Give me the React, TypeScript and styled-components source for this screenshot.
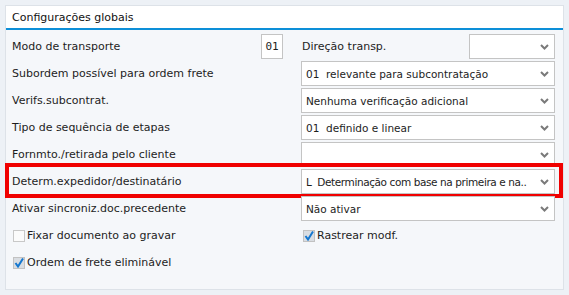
import React from 'react'
import styled, { createGlobalStyle, css } from 'styled-components'

const GlobalStyle = createGlobalStyle`
  html, body {
    margin: 0;
    padding: 0;
    background: #edf1f6;
  }
  body {
    font-family: 'DejaVu Sans', 'Noto Sans', sans-serif;
    font-size: 11px;
    color: #1d1d1d;
  }
`

const Page = styled.div`
  padding: 5px;
`

const Panel = styled.section`
  height: 285px;
  box-sizing: border-box;
  border: 1px solid #dde2e8;
  background: #f5f7fa;
  display: flex;
  flex-direction: column;
`

const Header = styled.header`
  height: 22px;
  background: #ffffff;
  border-bottom: 2px solid #0d8fd8;
  display: flex;
  align-items: center;
  padding: 0 6px;
  font-size: 11px;
  color: #111;
`

const Body = styled.div`
  padding: 3px 8px 0 6px;
  display: flex;
  flex-direction: column;
`

const Row = styled.div<{ $highlight?: boolean }>`
  position: relative;
  height: 27px;
  display: flex;
  align-items: center;
  ${({ $highlight }) =>
    $highlight &&
    css`
      &::after {
        content: '';
        position: absolute;
        top: -5px;
        bottom: -3px;
        left: -7px;
        right: -8px;
        border: 4px solid #f00000;
        pointer-events: none;
      }
    `}
`

const LabelCell = styled.div`
  width: 289px;
  flex: none;
  display: flex;
  align-items: center;
  justify-content: space-between;
  padding-right: 18px;
  box-sizing: border-box;
`

const Label = styled.span`
  white-space: nowrap;
`

const ControlCell = styled.div`
  width: 254px;
  flex: none;
  display: flex;
  align-items: center;
  justify-content: space-between;
  padding-left: 1px;
  box-sizing: border-box;
`

const CodeBox = styled.div`
  width: 22px;
  height: 25px;
  box-sizing: border-box;
  border: 1px solid #c4c4c4;
  background: #fff;
  display: flex;
  align-items: center;
  justify-content: center;
  font-family: 'DejaVu Sans Mono', 'Liberation Mono', monospace;
  font-size: 11px;
`

const SelectBox = styled.div<{ $width?: number }>`
  width: ${({ $width }) => ($width ? `${$width}px` : 'calc(100% + 1px)')};
  margin-left: ${({ $width }) => ($width ? '0' : '-1px')};
  height: 25px;
  box-sizing: border-box;
  border: 1px solid #c4c4c4;
  background: #fff;
  display: flex;
  align-items: center;
  padding: 0 4px 0 4px;
`

const SelectText = styled.span<{ $tight?: boolean }>`
  flex: 1;
  white-space: pre;
  font-size: 10.5px;
  letter-spacing: ${({ $tight }) => ($tight ? '-0.4px' : '0')};
`

const Chevron = styled.svg`
  width: 9px;
  height: 6px;
  flex: none;
  margin-right: 1px;
`

const CheckLine = styled.label`
  display: flex;
  align-items: center;
  gap: 2px;
  white-space: nowrap;
`

const Box = styled.span<{ $checked?: boolean }>`
  width: 12px;
  height: 12px;
  box-sizing: border-box;
  border: 1px solid ${({ $checked }) => ($checked ? '#c2c2c2' : '#c8c8c8')};
  background: ${({ $checked }) => ($checked ? '#d9dde2' : '#fbfbfb')};
  display: flex;
  align-items: center;
  justify-content: center;
  margin-left: 1px;
`

const Select = ({ value, width, tight }: { value?: string; width?: number; tight?: boolean }) => (
  <SelectBox $width={width}>
    <SelectText $tight={tight}>{value}</SelectText>
    <Chevron viewBox='0 0 9 6'>
      <path d='M1 1 L4.5 4.5 L8 1' fill='none' stroke='#7a7a7a' strokeWidth='2' />
    </Chevron>
  </SelectBox>
)

const Checkbox = ({ checked, label }: { checked?: boolean; label: string }) => (
  <CheckLine>
    <Box $checked={checked}>
      {checked && (
        <svg width='10' height='10' viewBox='0 0 10 10'>
          <path d='M1.5 5 L4 8.5 L9 0.5' fill='none' stroke='#1577cf' strokeWidth='2' />
        </svg>
      )}
    </Box>
    {label}
  </CheckLine>
)

const rows = [
  { label: 'Subordem possível para ordem frete', value: '01  relevante para subcontratação' },
  { label: 'Verifs.subcontrat.', value: 'Nenhuma verificação adicional' },
  { label: 'Tipo de sequência de etapas', value: '01  definido e linear' },
  { label: 'Fornmto./retirada pelo cliente', value: '' },
  {
    label: 'Determ.expedidor/destinatário',
    value: 'L  Determinação com base na primeira e na..',
    highlight: true,
  },
  { label: 'Ativar sincroniz.doc.precedente', value: 'Não ativar' },
]

export default function App() {
  return (
    <Page>
      <GlobalStyle />
      <Panel>
        <Header>Configurações globais</Header>
        <Body>
          <Row>
            <LabelCell>
              <Label>Modo de transporte</Label>
              <CodeBox>01</CodeBox>
            </LabelCell>
            <ControlCell>
              <Label>Direção transp.</Label>
              <Select width={86} />
            </ControlCell>
          </Row>
          {rows.map((r, i) => (
            <Row key={`row-${i}`} $highlight={r.highlight}>
              <LabelCell>
                <Label>{r.label}</Label>
              </LabelCell>
              <ControlCell>
                <Select value={r.value} tight={r.highlight} />
              </ControlCell>
            </Row>
          ))}
          <Row>
            <LabelCell>
              <Checkbox label='Fixar documento ao gravar' />
            </LabelCell>
            <ControlCell>
              <Checkbox checked label='Rastrear modf.' />
            </ControlCell>
          </Row>
          <Row>
            <LabelCell>
              <Checkbox checked label='Ordem de frete eliminável' />
            </LabelCell>
          </Row>
        </Body>
      </Panel>
    </Page>
  )
}
